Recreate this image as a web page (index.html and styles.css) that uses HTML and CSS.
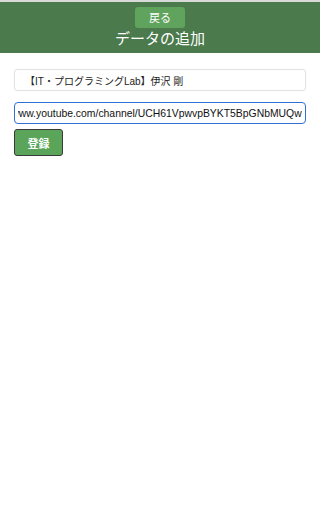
FILE: index.html
```html
<!DOCTYPE html>
<html lang="ja">
<head>
<meta charset="utf-8">
<meta name="viewport" content="width=device-width, initial-scale=1">
<title>データの追加</title>
<link rel="stylesheet" href="styles.css">
</head>
<body>
<div class="topline"></div>
<header class="header">
  <button class="back" type="button">戻る</button>
  <h1 class="title">データの追加</h1>
</header>
<main class="form">
  <input class="field" type="text" value="【IT・プログラミングLab】伊沢 剛">
  <input class="field focused" id="url" type="text" value="https://www.youtube.com/channel/UCH61VpwvpBYKT5BpGNbMUQw">
  <button class="submit" type="button">登録</button>
</main>
<script src="script.js"></script>
</body>
</html>
```
FILE: styles.css
```css
html, body {
  margin: 0;
  padding: 0;
  background: #ffffff;
  font-family: "Liberation Sans", "Noto Sans CJK JP", sans-serif;
}
.topline {
  height: 2px;
  background: #d9d9d9;
}
.header {
  background: #4b7a4c;
  height: 51px;
  display: flex;
  flex-direction: column;
  align-items: center;
  box-sizing: border-box;
  padding-top: 5px;
}
.back {
  width: 50px;
  height: 21px;
  padding: 0;
  border: none;
  border-radius: 3px;
  background: #5fa35d;
  color: #ffffff;
  font-family: "Noto Sans CJK JP", sans-serif;
  font-size: 11px;
  line-height: 21px;
}
.title {
  margin: 0;
  color: #ffffff;
  font-family: "Noto Sans CJK JP", sans-serif;
  font-weight: normal;
  font-size: 15px;
  line-height: 20px;
}
.form {
  display: flex;
  flex-direction: column;
  align-items: flex-start;
  padding: 16px 14px 0;
}
.field {
  width: 100%;
  box-sizing: border-box;
  height: 22px;
  margin: 0 0 11px;
  padding: 0 10px;
  border: 1px solid #e2e2e2;
  border-radius: 3px;
  background: #ffffff;
  font-family: "Liberation Sans", "Noto Sans CJK JP", sans-serif;
  font-size: 10px;
  color: #222222;
  outline: none;
}
.field.focused {
  height: 22px;
  border: 1px solid #2f6fd6;
  border-radius: 4px;
  margin-bottom: 5px;
  padding: 0 3px;
  font-size: 10.4px;
  color: #111111;
}
.submit {
  width: 49px;
  height: 27px;
  padding: 0;
  border: 1px solid #3a3a3a;
  border-radius: 3px;
  background: #5aa559;
  color: #ffffff;
  font-family: "Noto Sans CJK JP", sans-serif;
  font-weight: bold;
  font-size: 11px;
}
```
FILE: script.js
```js
var u = document.getElementById('url');
u.scrollLeft = u.scrollWidth;
```
